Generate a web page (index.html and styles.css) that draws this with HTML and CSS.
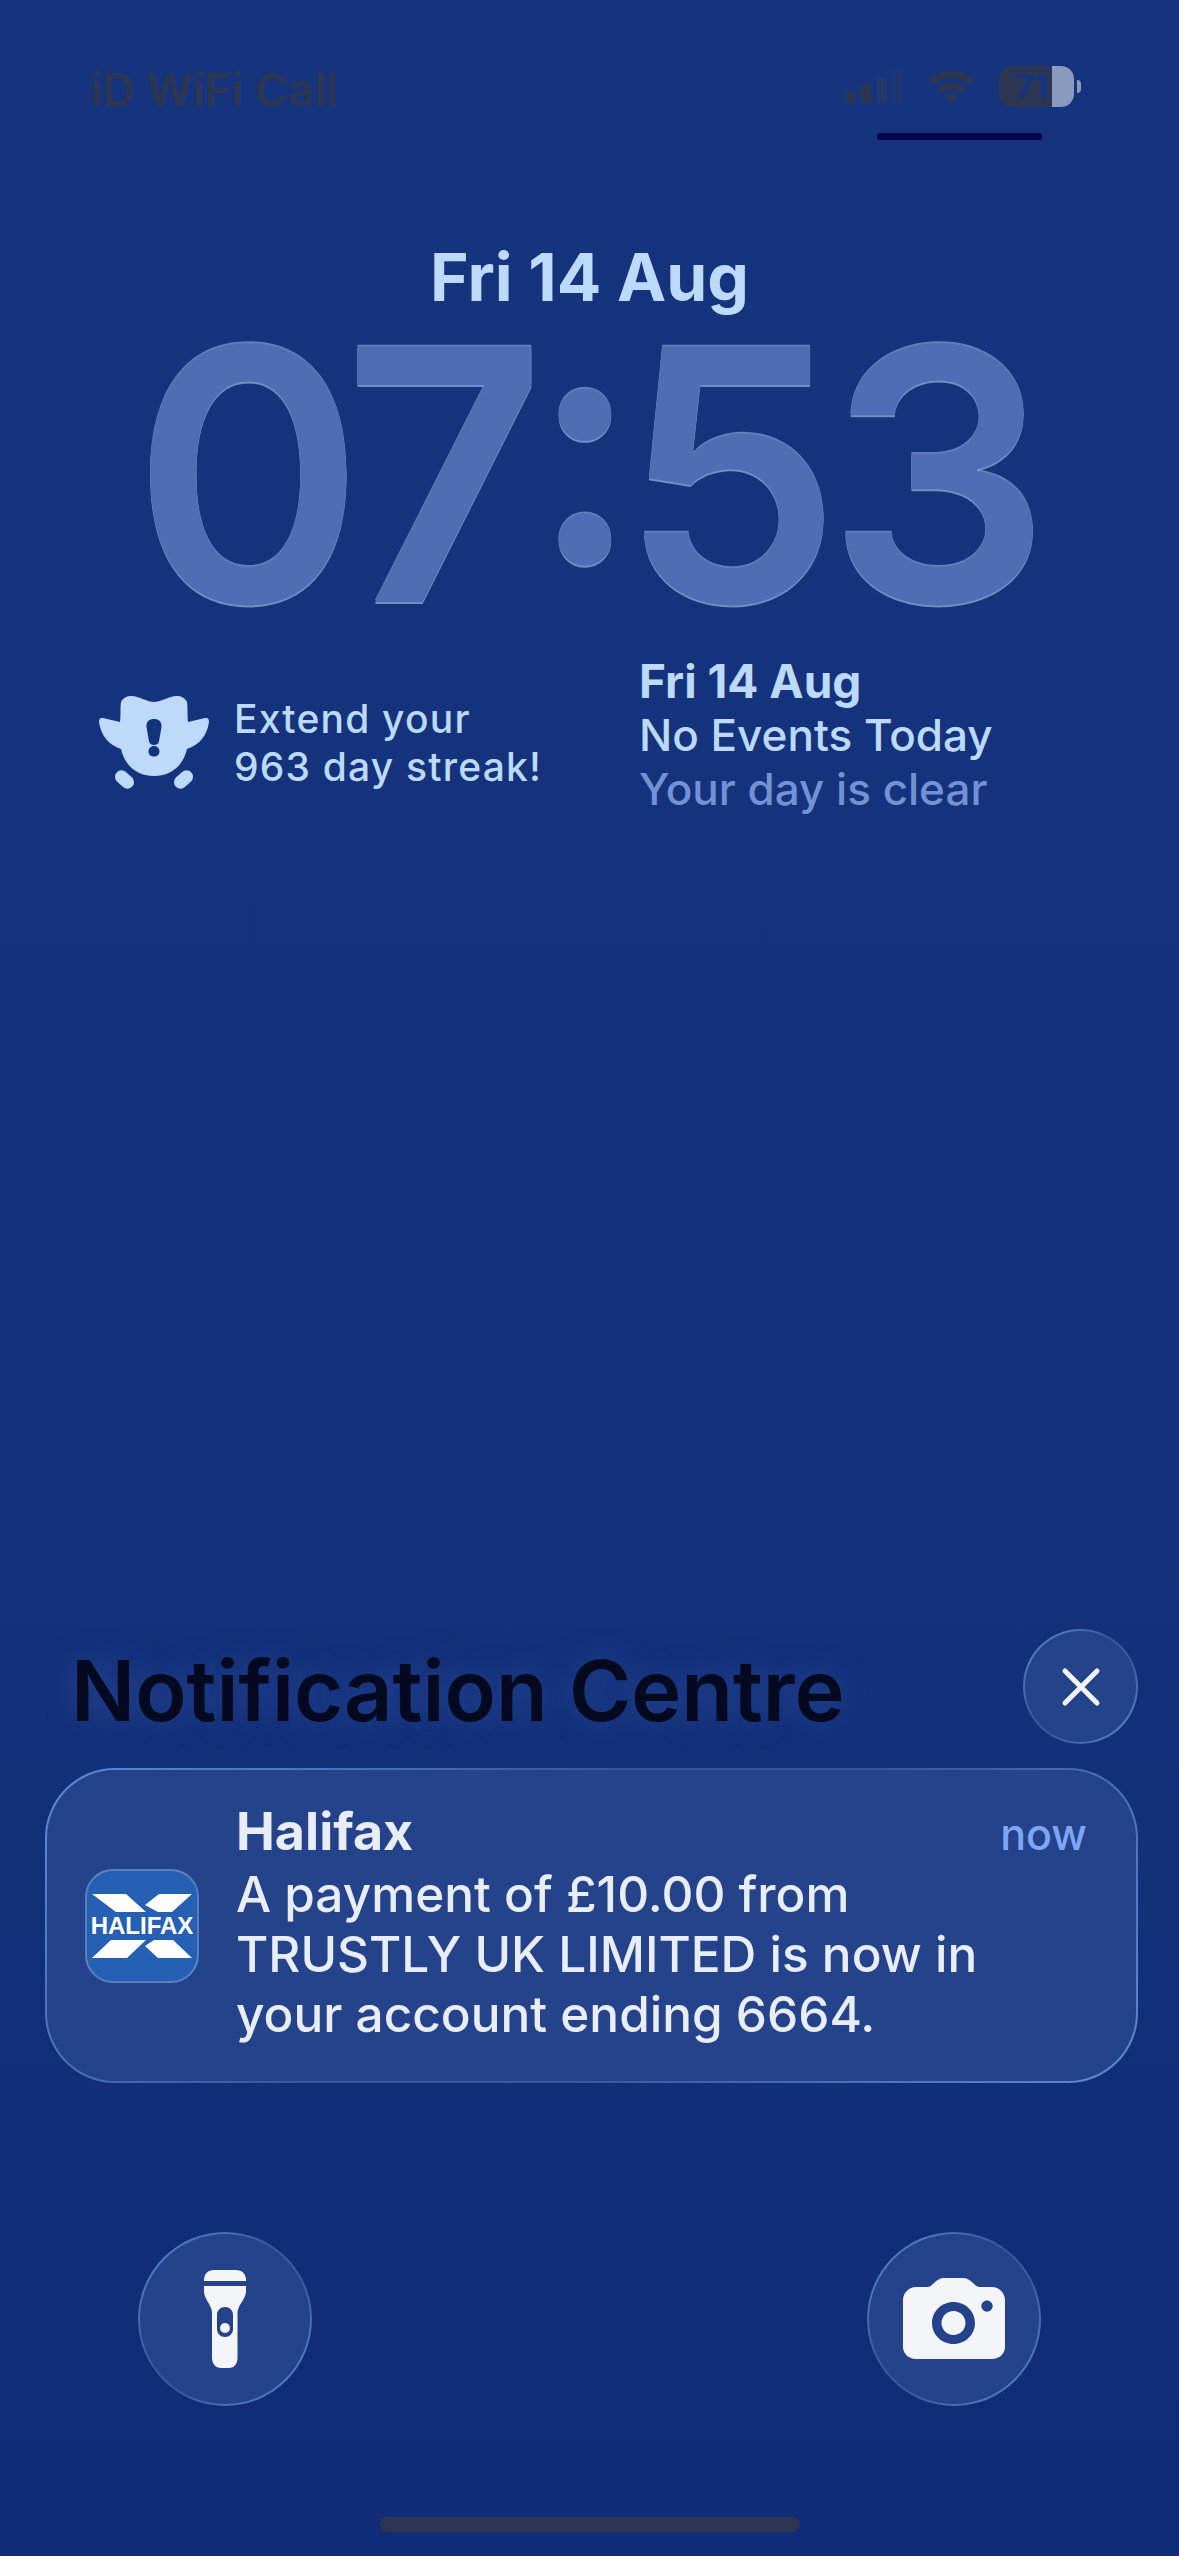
FILE: index.html
```html
<!DOCTYPE html>
<html lang="en">
<head>
    <meta charset="UTF-8">
    <meta name="viewport" content="width=device-width, initial-scale=1.0">
    <title>Lock Screen</title>
    <link rel="stylesheet" href="styles.css">
</head>
<body>
    <div class="screen">
        <!-- Status bar -->
        <header class="status">
            <span class="carrier">iD WiFi Call</span>
            <div class="status-right">
                <div class="status-icons">
                    <svg class="signal" width="58" height="35" viewBox="0 0 58 35">
                        <rect x="0" y="22" width="10" height="13" rx="3" fill="#2c3653"/>
                        <rect x="16" y="15" width="10" height="20" rx="3" fill="#2c3653"/>
                        <rect x="32" y="8" width="10" height="27" rx="3" fill="#24386c"/>
                        <rect x="48" y="0" width="9" height="35" rx="3" fill="#1e3674"/>
                    </svg>
                    <svg class="wifi" width="50" height="36" viewBox="0 0 50 38">
                        <path d="M1 11.500C14 -1.500 36 -1.500 49 11.500L44 17C33.500 7 16.500 7 6 17Z" fill="#2c3653"/>
                        <path d="M9.500 20C19 11.500 31 11.500 40.500 20L35.500 25.500C29 20 21 20 14.500 25.500Z" fill="#2c3653"/>
                        <path d="M18 28.500C22 25.500 28 25.500 32 28.500L25 37Z" fill="#2c3653"/>
                    </svg>
                    <div class="battery">
                        <div class="battery-body"><span class="battery-level">71</span></div>
                        <span class="battery-tip"></span>
                    </div>
                </div>
                <div class="status-line"></div>
            </div>
        </header>

        <!-- Clock -->
        <section class="clock">
            <div class="clock-date">Fri 14 Aug</div>
            <div class="clock-time">07<span class="clock-colon">:</span>53</div>
        </section>

        <!-- Widgets -->
        <section class="widgets">
            <div class="streak">
                <svg class="owl" width="112" height="94" viewBox="0 0 112 94">
                    <path fill="#bedafb" fill-rule="evenodd" d="M23 6C26 0 33 -1 39 1C46 3 51 6 56 6C61 6 66 3 73 1C79 -1 86 0 89 6C90 14 89 16 90 26L107 22C110 21.500 111 23 111 26C109 40 101 49 89 53C85 70 73 80 56 80C39 80 27 70 23 53C11 49 3 40 1 26C1 23 2 21.500 5 22L22 26C23 16 22 14 23 6ZM56 23C51 23 48 26 48.500 31L51 45.500C51.500 48 53.500 49 56 49C58.500 49 60.500 48 61 45.500L63.500 31C64 26 61 23 56 23ZM56 50C52.500 50 50.500 52.500 50.500 55.500C50.500 58.500 53 60.500 56 60.500C59 60.500 61.500 58.500 61.500 55.500C61.500 52.500 59.500 50 56 50Z"/>
                    <rect x="16" y="77" width="21" height="13" rx="6.500" transform="rotate(42 26.500 83.500)" fill="#bedafb"/>
                    <rect x="75" y="77" width="21" height="13" rx="6.500" transform="rotate(-42 85.500 83.500)" fill="#bedafb"/>
                </svg>
                <p class="streak-text">Extend your<br>963 day streak!</p>
            </div>
            <div class="calendar">
                <div class="calendar-date">Fri 14 Aug</div>
                <div>No Events Today</div>
                <div class="calendar-note">Your day is clear</div>
            </div>
        </section>

        <!-- Notifications -->
        <section class="notifications">
            <div class="centre-head">
                <h2 class="centre-title">Notification Centre</h2>
                <button class="glass close-btn" type="button">
                    <svg width="40" height="40" viewBox="0 0 40 40">
                        <path d="M4 4L36 36M36 4L4 36" stroke="#f4f5f9" stroke-width="5" stroke-linecap="round"/>
                    </svg>
                </button>
            </div>
            <article class="glass notice">
                <div class="app-icon">
                    <svg class="app-x" width="100" height="64" viewBox="0 0 100 64">
                        <path fill="#fff" d="M0 0H34L54 18H24ZM67 0H100L80 18H66L53 11ZM0 64H35L54 46H19ZM53 52L62 46H81L100 64H66Z"/>
                    </svg>
                    <span class="app-name">HALIFAX</span>
                </div>
                <div class="notice-body">
                    <div class="notice-top">
                        <strong class="notice-app">Halifax</strong>
                        <span class="notice-time">now</span>
                    </div>
                    <p class="notice-text">A payment of £10.00 from<br>TRUSTLY UK LIMITED is now in<br>your account ending 6664.</p>
                </div>
            </article>
        </section>

        <!-- Bottom shortcuts -->
        <footer class="actions">
            <button class="glass action-btn" type="button">
                <svg width="42" height="98" viewBox="0 0 42 98">
                    <path fill="#f4f5f9" d="M0 10C0 4 4 0 10 0H32C38 0 42 4 42 10V11H0Z"/>
                    <path fill="#f4f5f9" fill-rule="evenodd" d="M0 16H42V21C42 27 38 31 35 37C33.500 40 33.500 42 33.500 45V88C33.500 94 30 98 25 98H17C12 98 8 94 8 88V45C8 42 8 40 6.500 37C4 31 0 27 0 21ZM21 37C16.500 37 13 40.500 13 45V59C13 63.500 16.500 67 21 67C25.500 67 29 63.500 29 59V45C29 40.500 25.500 37 21 37Z"/>
                    <circle cx="21" cy="58" r="5" fill="#f4f5f9"/>
                </svg>
            </button>
            <button class="glass action-btn" type="button">
                <svg width="102" height="82" viewBox="0 0 102 82">
                    <path fill="#f4f5f9" fill-rule="evenodd" d="M13 9H24C27 9 29 7 31 5C34 2 37 0 41 0H60C64 0 67 2 70 5C72 7 74 9 77 9H89C96 9 102 15 102 22V69C102 76 96 81 89 81H13C6 81 0 76 0 69V22C0 15 6 9 13 9ZM50.500 24C38.500 24 29 33.500 29 45C29 56.500 38.500 66 50.500 66C62.500 66 72 56.500 72 45C72 33.500 62.500 24 50.500 24ZM50.500 33C57 33 62.500 38.500 62.500 45C62.500 51.500 57 57 50.500 57C44 57 38.500 51.500 38.500 45C38.500 38.500 44 33 50.500 33ZM84 22.500C81 22.500 78.300 25 78.300 28C78.300 31 81 33.700 84 33.700C87 33.700 89.700 31 89.700 28C89.700 25 87 22.500 84 22.500Z"/>
                </svg>
            </button>
        </footer>

        <div class="home-bar"></div>
    </div>
</body>
</html>
```

FILE: styles.css
```css
* {
    box-sizing: border-box;
}
html, body {
    margin: 0;
    padding: 0;
}
body {
    width: 1179px;
    height: 2556px;
    overflow: hidden;
    font-family: Inter, "Liberation Sans", sans-serif;
}
p, h2 {
    margin: 0;
}
button {
    padding: 0;
    cursor: pointer;
}
.screen {
    height: 2556px;
    padding-bottom: 24px;
    display: flex;
    flex-direction: column;
    background: linear-gradient(180deg, #16347e 0%, #15337c 45%, #102c76 100%);
}

/* status bar */
.status {
    height: 142px;
    padding: 66px 98px 0 90px;
    display: flex;
    justify-content: space-between;
    align-items: flex-start;
}
.carrier {
    font-size: 45.500px;
    line-height: 48px;
    font-weight: 600;
    color: #2c3653;
}
.status-right {
    display: flex;
    flex-direction: column;
    align-items: flex-start;
}
.status-icons {
    display: flex;
    align-items: center;
    gap: 23px;
    height: 41px;
}
.battery {
    display: flex;
    align-items: center;
    gap: 3px;
}
.battery-body {
    width: 75px;
    height: 41px;
    border-radius: 13px;
    background: linear-gradient(90deg, #2c3653 0, #2c3653 53px, #8a9abf 53px);
    overflow: hidden;
    display: flex;
    align-items: center;
    padding-left: 16px;
}
.battery-level {
    font-size: 33px;
    font-weight: 800;
    line-height: 33px;
    letter-spacing: -1px;
    color: #16347e;
}
.battery-tip {
    width: 4px;
    height: 13px;
    border-radius: 0 6px 6px 0;
    background: #8a9abf;
}
.status-line {
    width: 165px;
    height: 7px;
    margin-top: 26px;
    margin-left: 32px;
    border-radius: 3px;
    background: #000350;
}

/* clock */
.clock {
    text-align: center;
    padding-top: 100px;
    margin-bottom: 44px;
}
.clock-date {
    font-size: 66px;
    line-height: 70px;
    font-weight: 700;
    color: #bedafb;
}
.clock-time {
    margin-top: 28px;
    height: 270px;
    padding-right: 10px;
    font-size: 351px;
    line-height: 270px;
    font-weight: 600;
    color: #4f6db4;
    letter-spacing: -14px;
    white-space: nowrap;
    text-shadow: 0 2px 0 rgba(190, 215, 250, 0.55), 0 -2px 0 rgba(190, 215, 250, 0.45);
}
.clock-colon {
    font-size: 335px;
    line-height: 0;
    vertical-align: 39px;
    letter-spacing: -18px;
}

/* widgets */
.widgets {
    flex: 1;
    display: flex;
    align-items: flex-start;
    padding-left: 98px;
    color: #bedafb;
}
.streak {
    display: flex;
    align-items: center;
    gap: 24px;
    margin-top: 41px;
    width: 541px;
}
.streak-text {
    font-size: 39px;
    line-height: 48px;
    font-weight: 500;
    letter-spacing: 1.200px;
}
.calendar {
    font-size: 44px;
    line-height: 54px;
    font-weight: 500;
}
.calendar-date {
    font-size: 46px;
    font-weight: 700;
}
.calendar-note {
    color: #7391d3;
}

/* glass controls */
.glass {
    border: 2px solid transparent;
    background:
        linear-gradient(#24438b, #24438b) padding-box,
        linear-gradient(135deg, #6188d8 0%, #38599f 40%, #38599f 60%, #6188d8 100%) border-box;
}

/* notifications */
.notifications {
    padding: 0 41px 0 45px;
}
.centre-head {
    display: flex;
    justify-content: space-between;
    align-items: flex-start;
    padding-left: 26px;
    height: 139px;
}
.centre-title {
    font-size: 84.500px;
    line-height: 100px;
    font-weight: 600;
    color: #05091f;
    text-shadow: 0 0 30px rgba(70, 100, 180, 0.4);
    margin-top: 11px;
}
.close-btn {
    width: 115px;
    height: 115px;
    border-radius: 50%;
    display: flex;
    align-items: center;
    justify-content: center;
}
.notice {
    height: 315px;
    border-radius: 70px;
    display: flex;
    align-items: center;
    padding: 0 49px 0 38px;
    gap: 38px;
}
.app-icon {
    position: relative;
    width: 114px;
    height: 114px;
    flex: none;
    border-radius: 28px;
    background: #2660b4;
    border: 2px solid #5c80bf;
    display: flex;
    align-items: center;
    justify-content: center;
}
.app-name {
    position: absolute;
    left: 0;
    right: 0;
    top: 0;
    bottom: 0;
    display: flex;
    align-items: center;
    justify-content: center;
    font-family: "Liberation Sans", sans-serif;
    font-size: 24px;
    font-weight: 700;
    color: #fff;
}
.notice-body {
    flex: 1;
    margin-bottom: 4px;
    margin-left: -1px;
    color: #e8edf6;
}
.notice-top {
    display: flex;
    justify-content: space-between;
    align-items: center;
    height: 60px;
}
.notice-app {
    margin-bottom: 4px;
    font-size: 52px;
    font-weight: 700;
}
.notice-time {
    font-size: 43px;
    font-weight: 500;
    color: #7ea6f5;
}
.notice-text {
    font-size: 49.500px;
    line-height: 60px;
    font-weight: 500;
}

/* bottom shortcuts */
.actions {
    display: flex;
    justify-content: space-between;
    padding: 149px 138px 0;
}
.action-btn {
    width: 174px;
    height: 174px;
    border-radius: 50%;
    display: flex;
    align-items: center;
    justify-content: center;
}
.home-bar {
    width: 420px;
    height: 15px;
    margin: 111px auto 0;
    border-radius: 8px;
    background: #2c3653;
}
```
